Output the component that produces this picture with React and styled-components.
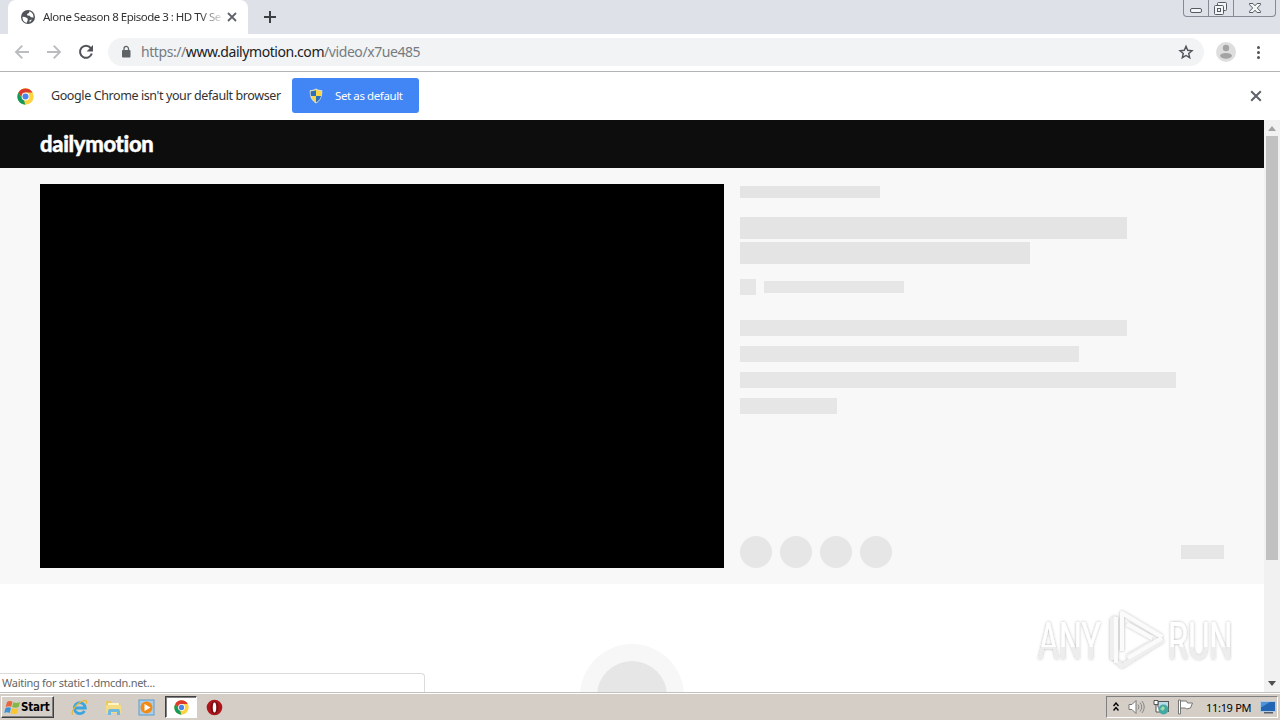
import React from "react";
import styled, { createGlobalStyle } from "styled-components";

const GlobalStyle = createGlobalStyle`
  * {
    box-sizing: border-box;
  }

  body {
    margin: 0;
    overflow: hidden;
    background: #fff;
    font-family: "Noto Sans", "Open Sans", sans-serif;
  }

  svg {
    display: block;
    flex-shrink: 0;
  }
`;

const Screen = styled.div`
  width: 1280px;
  height: 720px;
  display: flex;
  flex-direction: column;
  overflow: hidden;
`;

const Label = styled.span`
  display: block;
  flex-shrink: 0;
  padding-bottom: ${(p) => p.$lift || 0}px;
  white-space: nowrap;
  font-family: ${(p) => p.$font || "inherit"};
  font-size: ${(p) => p.$size || 11}px;
  font-weight: ${(p) => p.$weight || 400};
  letter-spacing: ${(p) => p.$spacing || 0}px;
  color: ${(p) => p.$color || "#333"};
`;

/* tab strip */

const TabStrip = styled.div`
  height: 34px;
  flex-shrink: 0;
  display: flex;
  padding-left: 8px;
  background: #dee1e8;
`;

const Tab = styled.div`
  width: 240px;
  height: 34px;
  padding: 0 10px 0 12px;
  display: flex;
  align-items: center;
  background: #fff;
  border-radius: 8px 8px 0 0;
`;

const TabTitle = styled.div`
  width: 178px;
  margin: 0 6px 0 7px;
  overflow: hidden;
  mask-image: linear-gradient(90deg, #000 88%, rgba(0, 0, 0, 0.15));
`;

const NewTab = styled.div`
  padding: 11px 0 0 16px;
`;

const WindowButtons = styled.div`
  width: 93px;
  height: 17px;
  margin: 0 4px 0 auto;
  display: flex;
  border: 1px solid #858a94;
  border-top: 0;
  border-radius: 0 0 4px 4px;
`;

const WindowButton = styled.div`
  width: ${(p) => p.$width}px;
  display: flex;
  justify-content: center;
  border-right: ${(p) => (p.$last ? "0" : "1px solid #858a94")};
`;

/* toolbar */

const Toolbar = styled.div`
  height: 38px;
  flex-shrink: 0;
  padding: 0 12px 1px 12px;
  display: flex;
  align-items: center;
  background: #fff;
  border-bottom: 1px solid #b2b4b6;
`;

const NavButtons = styled.div`
  width: 96px;
  display: flex;
  gap: 12px;
`;

const AddressBar = styled.div`
  width: 1096px;
  height: 28px;
  padding: 0 8px 0 8px;
  display: flex;
  align-items: center;
  background: #f1f3f5;
  border-radius: 14px;
`;

const Url = styled.div`
  display: flex;
  flex: 1;
  margin-left: 5px;
`;

const ToolbarRight = styled.div`
  display: flex;
  align-items: center;
  gap: 12px;
  margin-left: 12px;
`;

/* default browser bar */

const InfoBar = styled.div`
  height: 48px;
  flex-shrink: 0;
  padding: 0 18px 0 17px;
  display: flex;
  align-items: center;
  background: #fff;
`;

const InfoText = styled.div`
  width: 241px;
  margin-left: 17px;
`;

const DefaultButton = styled.div`
  width: 127px;
  height: 35px;
  margin-top: -1px;
  padding-left: 16px;
  display: flex;
  align-items: center;
  gap: 11px;
  background: #4285f4;
  border-radius: 3px;
`;

const InfoClose = styled.div`
  margin-left: auto;
`;

/* page */

const Viewport = styled.div`
  height: 572px;
  display: flex;
`;

const Page = styled.div`
  position: relative;
  width: 1264px;
  overflow: hidden;
  background: #fff;
`;

const Header = styled.div`
  height: 48px;
  padding: 0 0 2px 40px;
  display: flex;
  align-items: center;
  background: #0d0d0d;
`;

const Brand = styled(Label)`
  -webkit-text-stroke: 0.4px #fff;
`;

const Watch = styled.div`
  height: 416px;
  padding: 16px 40px;
  display: flex;
  gap: 16px;
  background: #f8f8f8;
`;

const Player = styled.div`
  width: 684px;
  height: 384px;
  background: #000;
`;

const Details = styled.div`
  flex: 1;
  padding-top: 2px;
  display: flex;
  flex-direction: column;
`;

const Bone = styled.div`
  width: ${(p) => p.$w}px;
  height: ${(p) => p.$h}px;
  margin-top: ${(p) => p.$top || 0}px;
  flex-shrink: 0;
  background: ${(p) => p.$color || "#e6e6e6"};
  border-radius: ${(p) => (p.$round ? "50%" : "0")};
`;

const BoneRow = styled.div`
  display: flex;
  align-items: center;
  gap: 8px;
  margin-top: ${(p) => p.$top || 0}px;
`;

const Actions = styled(BoneRow)`
  margin-top: auto;

  > :last-child {
    margin-left: auto;
  }
`;

const AvatarRing = styled.div`
  width: 104px;
  height: 104px;
  margin: 60px auto 0;
  display: flex;
  align-items: center;
  justify-content: center;
  background: #f7f7f7;
  border-radius: 50%;
`;

const StatusBubble = styled.div`
  position: absolute;
  left: 0;
  bottom: 0;
  width: 425px;
  height: 19px;
  padding-left: 2px;
  display: flex;
  align-items: center;
  background: #fff;
  border: 1px solid #dcdcdc;
  border-width: 1px 1px 0 0;
  border-radius: 0 4px 0 0;
`;

const Watermark = styled.div`
  position: absolute;
  left: 1030px;
  top: 482px;
`;

const Scrollbar = styled.div`
  width: 16px;
  padding: 6px 0 6px;
  display: flex;
  flex-direction: column;
  align-items: center;
  background: #f1f1f1;
`;

const Thumb = styled.div`
  width: 12px;
  height: 424px;
  margin: 5px 0 auto;
  background: #c1c1c1;
`;

/* taskbar */

const Taskbar = styled.div`
  height: 28px;
  flex-shrink: 0;
  padding: 1px 2px 0 1px;
  display: flex;
  align-items: center;
  background: #d4cec6;
  border-top: 1px solid #c3c1bd;
  box-shadow: inset 0 1px 0 #fff;
`;

const StartButton = styled.div`
  width: 53px;
  height: 22px;
  padding-left: 2px;
  display: flex;
  align-items: center;
  border: 1px solid;
  border-color: #fff #404040 #404040 #fff;
  box-shadow: inset -1px -1px 0 #808080;
`;

const Launchers = styled.div`
  display: flex;
  align-items: center;
  margin-left: 17px;
`;

const Launcher = styled.div`
  width: 17px;
  margin-right: ${(p) => p.$gap}px;
`;

const ActiveTask = styled.div`
  width: 32px;
  height: 22px;
  margin-right: 9px;
  display: flex;
  align-items: center;
  justify-content: center;
  background: #fff;
  border: 1px solid;
  border-color: #404040 #fff #fff #404040;
  box-shadow: inset 1px 1px 0 #808080;
`;

const Tray = styled.div`
  width: 172px;
  height: 22px;
  margin-left: auto;
  padding-left: 6px;
  display: flex;
  align-items: center;
  border: 1px solid;
  border-color: #808080 #fff #fff #808080;
`;

const TrayItem = styled.div`
  width: ${(p) => p.$width}px;
`;

function Cross({ size = 9, color = "#5f6368", stroke = 1.8 }) {
  return (
    <svg width={size} height={size} viewBox="0 0 10 10">
      <path d="M1 1 9 9M9 1 1 9" stroke={color} strokeWidth={stroke} />
    </svg>
  );
}

function GlobeIcon() {
  return (
    <svg width="16" height="16" viewBox="0 0 16 16">
      <circle cx="8" cy="8" r="7" fill="#505459" />
      <path
        d="M2.5 7.8 5 8l2.5 1.2.3 2L6.5 14C3.7 13.2 2.2 10.8 2.5 7.8ZM9.5 2.3 9 4 7 5l.4 1.6 2.3.1 1.2 1.5 2.6.2c.2-2.8-1.5-5.2-4-6.1ZM9.4 11.2l2.6-.8-2.2 3.2Z"
        fill="#fff"
      />
    </svg>
  );
}

function ArrowIcon({ flip }) {
  return (
    <svg
      width="20"
      height="20"
      viewBox="0 0 20 20"
      transform={flip ? "scale(-1 1)" : undefined}
    >
      <path
        d="M17 10H4M10.3 3.7 4 10l6.3 6.3"
        fill="none"
        stroke="#babcbe"
        strokeWidth="1.9"
      />
    </svg>
  );
}

function ReloadIcon() {
  return (
    <svg width="20" height="20" viewBox="0 0 20 20">
      <path
        d="M14.7 6A6 6 0 1 0 15.8 11.5"
        fill="none"
        stroke="#505459"
        strokeWidth="2"
      />
      <path d="M17 3v6.4h-6.4Z" fill="#505459" />
    </svg>
  );
}

function LockIcon() {
  return (
    <svg width="20" height="20" viewBox="0 0 20 20">
      <rect x="6" y="8" width="8.500" height="7.500" rx="1" fill="#5f6368" />
      <path
        d="M8 8.500V6.700a2.250 2.250 0 0 1 4.500 0v1.800"
        fill="none"
        stroke="#5f6368"
        strokeWidth="1.300"
      />
    </svg>
  );
}

function StarIcon() {
  return (
    <svg width="20" height="20" viewBox="0 0 20 20">
      <path
        d="m10 4.300 1.700 4 4.300.4-3.300 2.800 1 4.200-3.700-2.200-3.700 2.200 1-4.200L4 8.700l4.300-.4Z"
        fill="none"
        stroke="#505459"
        strokeWidth="1.400"
      />
    </svg>
  );
}

function ProfileIcon() {
  return (
    <svg width="20" height="20" viewBox="0 0 20 20">
      <circle cx="10" cy="10" r="10" fill="#dedede" />
      <circle cx="10" cy="6" r="3.200" fill="#a4a4a4" />
      <ellipse cx="10" cy="13.800" rx="6" ry="2.900" fill="#a4a4a4" />
    </svg>
  );
}

function MenuIcon() {
  return (
    <svg width="20" height="20" viewBox="0 0 20 20">
      {[5.5, 10.500, 15.500].map((y) => (
        <circle key={y} cx="10.500" cy={y} r="1.500" fill="#505459" />
      ))}
    </svg>
  );
}

function ChromeIcon({ size = 17 }) {
  return (
    <svg width={size} height={size} viewBox="0 0 48 48">
      <circle cx="24" cy="24" r="23" fill="#fdd23e" />
      <path d="M4 12.5A23 23 0 0 1 44 13H24L14.5 29.5Z" fill="#db3a2d" />
      <path d="M4 12.5 14.5 29.5 24 35 23 47A23 23 0 0 1 4 12.5Z" fill="#149a5b" />
      <path d="M33.5 29.5 23 47 20 34Z" fill="#fdd23e" />
      <circle cx="24" cy="24" r="11" fill="#fff" />
      <circle cx="24" cy="24" r="8.5" fill="#4a86e8" />
    </svg>
  );
}

function ShieldIcon() {
  return (
    <svg width="16" height="16" viewBox="0 0 16 16">
      <path
        d="M8 1c2 1.2 3.8 1.6 5.8 1.6C14 8.5 12 12.7 8 15 4 12.7 2 8.5 2.2 2.6 4.2 2.6 6 2.2 8 1Z"
        fill="#f9d548"
        stroke="#dfe5df"
      />
      <path d="M8 2.2V8H2.9C2.7 6.5 2.6 5 2.7 3.2 4.6 3.2 6.4 2.9 8 2.2Z" fill="#2c6fbd" />
      <path d="M8 8h5.1c-.8 2.8-2.4 4.8-5.1 6.4Z" fill="#2c6fbd" />
    </svg>
  );
}

function WatermarkLogo() {
  return (
    <svg width="210" height="76" viewBox="0 0 210 76">
      <defs>
        <linearGradient id="sheen" x1="0" y1="0" x2="0" y2="1">
          <stop offset="58%" stopColor="#fff" />
          <stop offset="58%" stopColor="#ededed" />
        </linearGradient>
        <filter id="halo" x="-10%" y="-20%" width="120%" height="140%">
          <feDropShadow dx="0" dy="0" stdDeviation="1.6" floodColor="#000" floodOpacity="0.3" />
        </filter>
      </defs>
      <g filter="url(#halo)">
        <g fill="url(#sheen)" fontFamily="Roboto, sans-serif" fontSize="51" fontWeight="400">
          <text transform="translate(8 57) scale(.66 1)" textLength="95" lengthAdjust="spacingAndGlyphs">
            ANY
          </text>
          <text transform="translate(138 57) scale(.66 1)" textLength="98" lengthAdjust="spacingAndGlyphs">
            RUN
          </text>
        </g>
        <g fill="none" strokeWidth="4" strokeLinejoin="round">
          <path d="M82 58V18l4-3M97 55l23-13M92 48V20M133 38 92 64l-4-4" stroke="#efefef" />
          <path d="M86 61V15M92 49V11l40 24M98 56l34-20M97 22l25 14" stroke="#fbfbfb" />
        </g>
      </g>
    </svg>
  );
}

function StartFlag() {
  return (
    <svg width="17" height="17" viewBox="0 0 17 17">
      <path d="M3 3c2-1.5 4-1 5.5-.2L7.2 7.8C5.5 7 3.7 7 1.7 8Z" fill="#e7663a" />
      <path d="M9.4 3.2c2 1 4 1 6.6-.2l-1.4 5c-2.2 1-4.5 1-6.5.1Z" fill="#83b842" />
      <path d="M1.5 9c2-1 3.8-.9 5.5-.1L5.7 14c-2-1-3.7-.9-5.5 0Z" fill="#3c94d7" />
      <path d="M7.9 9.2c2 1 4 1 6.5 0l-1.4 5c-2.2 1.1-4.4 1.1-6.5.1Z" fill="#f9c632" />
    </svg>
  );
}

function ExplorerIcon() {
  return (
    <svg width="17" height="17" viewBox="0 0 17 17">
      <path
        d="M13.5 12A5.5 5.500 0 1 1 14.300 9H4"
        fill="none"
        stroke="#3ba5df"
        strokeWidth="2.800"
      />
      <path
        d="M2 15.5C-1 13 6 3.5 13 1.7c3-.8 3 1 2 3"
        fill="none"
        stroke="#e8b93b"
        strokeWidth="1.3"
      />
    </svg>
  );
}

function FolderIcon() {
  return (
    <svg width="17" height="17" viewBox="0 0 17 17">
      <path d="M1 2h5l1 2h8v8H1Z" fill="#e8c765" />
      <path d="M3 4h11v4H3Z" fill="#fff5bf" />
      <path d="M1 6h15v8H1Z" fill="#f4dc85" />
      <path d="M3 16v-4q0-2 2-2h8q2 0 2 2v4h-3v-3H6v3Z" fill="#70b9de" />
    </svg>
  );
}

function MediaIcon() {
  return (
    <svg width="17" height="17" viewBox="0 0 17 17">
      <rect x="1" y="1" width="15" height="15" fill="#a9cee9" stroke="#5b9bd0" />
      <circle cx="8.5" cy="8.5" r="6" fill="#f08b19" />
      <path d="m6.5 5 6 3.5-6 3.5Z" fill="#fff" />
    </svg>
  );
}

function OperaIcon() {
  return (
    <svg width="17" height="17" viewBox="0 0 17 17">
      <circle cx="8.5" cy="8.5" r="7.8" fill="#ad151b" />
      <ellipse cx="8.5" cy="8.5" rx="4" ry="6.3" fill="#7c0d12" />
      <ellipse cx="8.5" cy="8.5" rx="1.7" ry="5" fill="#fff" />
    </svg>
  );
}

function SpeakerIcon() {
  return (
    <svg width="17" height="16" viewBox="0 0 17 16" fill="none">
      <path d="M1 5.5h3l4-4v13l-4-4H1Z" fill="#fff" stroke="#777" />
      <path d="M10 5.5q2 2.5 0 5M12 3.5q3.5 4.5 0 9M14 2q4.5 6 0 12" stroke="#888" />
    </svg>
  );
}

function NetworkIcon() {
  return (
    <svg width="17" height="16" viewBox="0 0 17 16">
      <rect x="5" y="2.5" width="10.500" height="10" fill="#b8dce9" stroke="#555" />
      <path d="M1 1.5h4v4H1ZM3 5v8h4" fill="#fff" stroke="#555" />
      <circle cx="10.500" cy="10.500" r="5" fill="#45a7a1" />
      <path d="m7 10 3-3 2 2-2 3Z" fill="#9bdba7" />
    </svg>
  );
}

function FlagIcon() {
  return (
    <svg width="17" height="16" viewBox="0 0 17 16">
      <path d="M1.5 1v14h2V1ZM3.5 2h6l1 2h5l-2 5-4 1-1-1h-5Z" fill="#fff" stroke="#777" />
    </svg>
  );
}

function DesktopIcon() {
  return (
    <svg width="16" height="15" viewBox="0 0 16 15">
      <path d="M.5 1.5h15v10H.5Z" fill="#2364b3" stroke="#b3c9dd" />
      <path d="M1 2h9l-8 5H1Z" fill="#4e92d9" />
      <path d="M4 12h9v1.5H4Z" fill="#555d68" />
    </svg>
  );
}

function App() {
  return (
    <Screen>
      <GlobalStyle />
      <TabStrip>
        <Tab>
          <GlobeIcon />
          <TabTitle>
            <Label $size={11.5} $spacing={-0.5} $lift={1}>
              Alone Season 8 Episode 3 : HD TV Se
            </Label>
          </TabTitle>
          <Cross size={10} />
        </Tab>
        <NewTab>
          <svg width="12" height="12" viewBox="0 0 12 12">
            <path d="M6 0v12M0 6h12" stroke="#3c4043" strokeWidth="2" />
          </svg>
        </NewTab>
        <WindowButtons>
          <WindowButton $width={25}>
            <svg width="24" height="16" viewBox="0 0 24 16">
              <rect x="6.5" y="8.5" width="11" height="4" rx="1.5" fill="#f4f5f7" stroke="#555a63" />
            </svg>
          </WindowButton>
          <WindowButton $width={25}>
            <svg width="24" height="16" viewBox="0 0 24 16">
              <g fill="#f4f5f7" stroke="#555a63">
                <rect x="8.5" y="2.5" width="9" height="8" rx="1" />
                <rect x="5.5" y="5.5" width="9" height="9" rx="1" />
                <rect x="8.5" y="8.5" width="3" height="3" />
              </g>
            </svg>
          </WindowButton>
          <WindowButton $width={41} $last>
            <svg width="24" height="16" viewBox="0 0 24 16">
              <path
                d="M6.5 3.5h3.5l2 2.3 2-2.3h3.5v1.2L14.3 8l3.2 3.3v1.2H14l-2-2.3-2 2.3H6.5v-1.2L9.7 8 6.500 4.700Z"
                fill="#f4f5f7"
                stroke="#555a63"
              />
            </svg>
          </WindowButton>
        </WindowButtons>
      </TabStrip>

      <Toolbar>
        <NavButtons>
          <ArrowIcon />
          <ArrowIcon flip />
          <ReloadIcon />
        </NavButtons>
        <AddressBar>
          <LockIcon />
          <Url>
            <Label $size={14} $spacing={-0.43} $lift={1} $color="#777b80">
              https://
            </Label>
            <Label $size={14} $spacing={-0.43} $lift={1} $color="#202124">
              www.dailymotion.com
            </Label>
            <Label $size={14} $spacing={-0.43} $lift={1} $color="#777b80">
              /video/x7ue485
            </Label>
          </Url>
          <StarIcon />
        </AddressBar>
        <ToolbarRight>
          <ProfileIcon />
          <MenuIcon />
        </ToolbarRight>
      </Toolbar>

      <InfoBar>
        <ChromeIcon />
        <InfoText>
          <Label $size={12.5} $spacing={-0.4} $lift={2}>
            Google Chrome isn't your default browser
          </Label>
        </InfoText>
        <DefaultButton>
          <ShieldIcon />
          <Label $size={11.5} $spacing={-0.4} $lift={1} $color="#fff">
            Set as default
          </Label>
        </DefaultButton>
        <InfoClose>
          <Cross size={12} stroke={1.7} />
        </InfoClose>
      </InfoBar>

      <Viewport>
        <Page>
          <Header>
            <Brand $font="Lato, sans-serif" $size={22} $weight={900} $color="#fff" $spacing={-0.33}>
              dailymotion
            </Brand>
          </Header>
          <Watch>
            <Player />
            <Details>
              <Bone $w={140} $h={12} $color="#e4e4e4" />
              <Bone $w={387} $h={22} $top={19} $color="#e4e4e4" />
              <Bone $w={290} $h={22} $top={3} $color="#e4e4e4" />
              <BoneRow $top={15}>
                <Bone $w={16} $h={16} />
                <Bone $w={140} $h={12} />
              </BoneRow>
              <Bone $w={387} $h={16} $top={25} />
              <Bone $w={339} $h={16} $top={10} />
              <Bone $w={436} $h={16} $top={10} />
              <Bone $w={97} $h={16} $top={10} />
              <Actions>
                <Bone $w={32} $h={32} $round />
                <Bone $w={32} $h={32} $round />
                <Bone $w={32} $h={32} $round />
                <Bone $w={32} $h={32} $round />
                <Bone $w={43} $h={14} />
              </Actions>
            </Details>
          </Watch>
          <AvatarRing>
            <Bone $w={70} $h={70} $round />
          </AvatarRing>
          <Watermark>
            <WatermarkLogo />
          </Watermark>
          <StatusBubble>
            <Label $size={11} $spacing={-0.27} $lift={1} $color="#666">
              Waiting for static1.dmcdn.net...
            </Label>
          </StatusBubble>
        </Page>
        <Scrollbar>
          <svg width="8" height="5" viewBox="0 0 8 5">
            <path d="M0 5 4 0l4 5Z" fill="#a3a3a3" />
          </svg>
          <Thumb />
          <svg width="8" height="5" viewBox="0 0 8 5">
            <path d="M0 0h8L4 5Z" fill="#505050" />
          </svg>
        </Scrollbar>
      </Viewport>

      <Taskbar>
        <StartButton>
          <StartFlag />
          <Label
            $font='"DejaVu Sans Condensed", "DejaVu Sans", sans-serif'
            $size={11.5}
            $weight={700}
            $spacing={-0.2}
            $color="#000"
          >
            Start
          </Label>
        </StartButton>
        <Launchers>
          <Launcher $gap={17}>
            <ExplorerIcon />
          </Launcher>
          <Launcher $gap={16}>
            <FolderIcon />
          </Launcher>
          <Launcher $gap={10}>
            <MediaIcon />
          </Launcher>
          <ActiveTask>
            <ChromeIcon size={15} />
          </ActiveTask>
          <Launcher $gap={0}>
            <OperaIcon />
          </Launcher>
        </Launchers>
        <Tray>
          <TrayItem $width={15}>
            <svg width="6" height="10" viewBox="0 0 6 10">
              <path d="m.5 4 2.5-3 2.5 3M.5 8.5l2.500-3 2.500 3" fill="none" stroke="#000" strokeWidth="1.4" />
            </svg>
          </TrayItem>
          <TrayItem $width={25}>
            <SpeakerIcon />
          </TrayItem>
          <TrayItem $width={24}>
            <NetworkIcon />
          </TrayItem>
          <TrayItem $width={29}>
            <FlagIcon />
          </TrayItem>
          <TrayItem $width={54}>
            <Label $color="#000" $spacing={-0.3}>
              11:19 PM
            </Label>
          </TrayItem>
          <DesktopIcon />
        </Tray>
      </Taskbar>
    </Screen>
  );
}

export default App;
